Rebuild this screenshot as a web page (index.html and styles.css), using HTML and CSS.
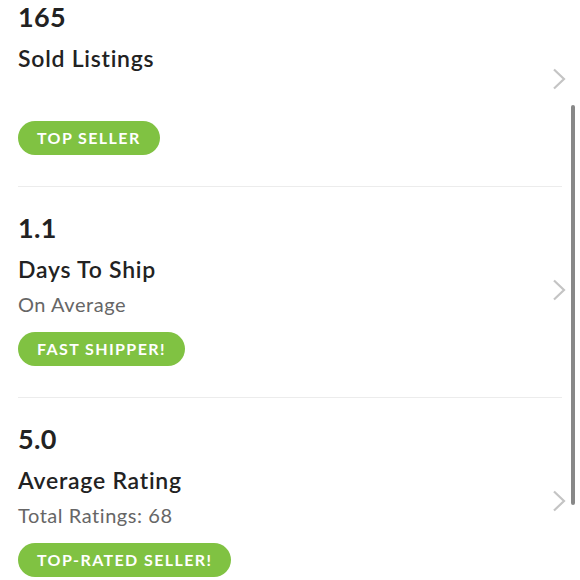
FILE: index.html
```html
<!DOCTYPE html>
<html>
<head>
<meta charset="utf-8">
<link rel="stylesheet" href="styles.css">
</head>
<body>
<div class="list">
  <div class="stat first">
    <div class="info">
      <div class="num">165</div>
      <div class="title">Sold Listings</div>
      <div class="sub blank"></div>
      <div class="badge">TOP SELLER</div>
    </div>
    <svg class="chev" width="14" height="22" viewBox="0 0 14 22"><path d="M2 1.5 L12 11 L2 20.5" fill="none" stroke="#c4c4c4" stroke-width="2.2"/></svg>
  </div>
  <div class="stat">
    <div class="info">
      <div class="num">1.1</div>
      <div class="title">Days To Ship</div>
      <div class="sub">On Average</div>
      <div class="badge">FAST SHIPPER!</div>
    </div>
    <svg class="chev" width="14" height="22" viewBox="0 0 14 22"><path d="M2 1.5 L12 11 L2 20.5" fill="none" stroke="#c4c4c4" stroke-width="2.2"/></svg>
  </div>
  <div class="stat">
    <div class="info">
      <div class="num">5.0</div>
      <div class="title">Average Rating</div>
      <div class="sub">Total Ratings: 68</div>
      <div class="badge">TOP-RATED SELLER!</div>
    </div>
    <svg class="chev" width="14" height="22" viewBox="0 0 14 22"><path d="M2 1.5 L12 11 L2 20.5" fill="none" stroke="#c4c4c4" stroke-width="2.2"/></svg>
  </div>
</div>
<div class="scrollbar"></div>
</body>
</html>
```
FILE: styles.css
```css
html, body {
  margin: 0;
  padding: 0;
  background: #fff;
  width: 580px;
  height: 580px;
  overflow: hidden;
  font-family: Lato, "Liberation Sans", sans-serif;
  color: #222;
}
.list {
  margin-top: -24px;
}
.stat {
  display: flex;
  align-items: center;
  margin: 0 18px;
  padding: 26px 0 31px;
  border-bottom: 1px solid #ececec;
}
.info {
  flex: 1;
  display: flex;
  flex-direction: column;
  align-items: flex-start;
}
.num {
  font-size: 27px;
  font-weight: 700;
  line-height: 30px;
  letter-spacing: 0.3px;
}
.title {
  font-size: 23px;
  font-weight: 600;
  line-height: 28px;
  margin-top: 12px;
  letter-spacing: 0.75px;
}
.sub {
  font-size: 20px;
  line-height: 24px;
  color: #666;
  margin-top: 9px;
  letter-spacing: 0.55px;
}
.sub.blank {
  height: 24px;
}
.badge {
  margin-top: 16px;
  background: #80c242;
  color: #fff;
  font-size: 16px;
  font-weight: 700;
  line-height: 34px;
  height: 34px;
  padding: 0 19px;
  border-radius: 17px;
  letter-spacing: 1.4px;
}
.chev {
  margin-right: -4px;
  flex: none;
}
.scrollbar {
  position: absolute;
  left: 571px;
  top: 105px;
  width: 4px;
  height: 400px;
  border-radius: 2px;
  background: #888;
}
```
